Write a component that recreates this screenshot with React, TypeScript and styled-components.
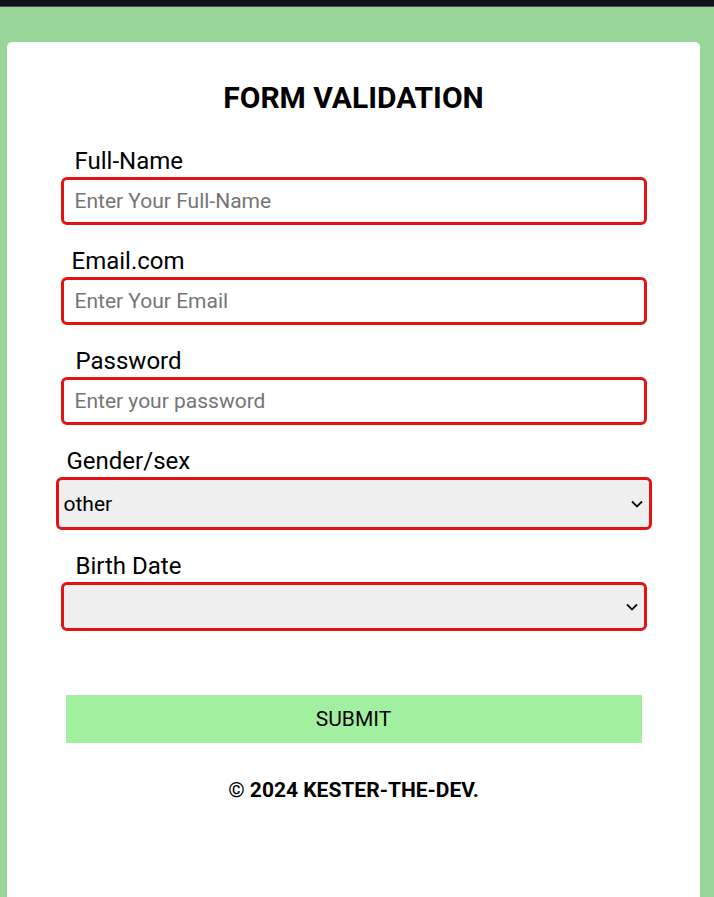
import React from "react";
import styled, { createGlobalStyle } from "styled-components";

const Global = createGlobalStyle`
  html, body { margin: 0; padding: 0; }
  body { font-family: Roboto, "Liberation Sans", Arial, sans-serif; background: #98d598; }
  * { box-sizing: border-box; }
`;

const TopBar = styled.div`
  height: 7px;
  background: #111119;
  border-bottom: 1px solid #4a4a4f;
`;

const Page = styled.div`
  background: #98d598;
  padding: 35px 14px 0 7px;
  height: 890px;
  overflow: hidden;
`;

const Card = styled.div`
  background: #ffffff;
  border-radius: 5px 5px 0 0;
  padding: 39px 0 0;
  height: 100%;
  display: flex;
  flex-direction: column;
  align-items: center;
`;

const Title = styled.h1`
  margin: 0 0 32px;
  font-size: 30px;
  line-height: 34px;
  font-weight: 700;
  color: #000;
`;

const Form = styled.form`
  width: 596px;
  display: flex;
  flex-direction: column;
  align-items: center;
`;

const Group = styled.div<{ $wide?: boolean }>`
  width: ${(p) => (p.$wide ? "596px" : "586px")};
  display: flex;
  flex-direction: column;
  gap: 2px;
  margin-top: 22px;
  &:first-child { margin-top: 0; }
`;

const Label = styled.label<{ $indent: number }>`
  font-size: 24px;
  line-height: 28px;
  color: #000;
  padding-left: ${(p) => p.$indent}px;
`;

const TextInput = styled.input`
  height: 48px;
  width: 100%;
  border: 3px solid #e01414;
  border-radius: 6px;
  padding: 0 11px;
  font-family: inherit;
  font-size: 21px;
  color: #000;
  background: #fff;
  outline: none;
  &::placeholder { color: #757575; }
`;

const SelectWrap = styled.div`
  position: relative;
  width: 100%;
`;

const Select = styled.select<{ $h: number }>`
  display: block;
  appearance: none;
  -webkit-appearance: none;
  height: ${(p) => p.$h}px;
  width: 100%;
  border: 3px solid #e01414;
  border-radius: 6px;
  padding: 0 30px 0 5px;
  font-family: inherit;
  font-size: 21px;
  color: #000;
  background: #efefef;
  outline: none;
`;

const Chevron = styled.svg`
  position: absolute;
  right: 9px;
  top: 50%;
  width: 12px;
  height: 8px;
  margin-top: -4px;
  pointer-events: none;
`;

const Submit = styled.button`
  margin-top: 64px;
  width: 576px;
  height: 48px;
  border: none;
  background: #a0f0a0;
  font-family: inherit;
  font-size: 21px;
  color: #000;
`;

const Footer = styled.p`
  margin: 35px 0 0;
  font-size: 21px;
  line-height: 25px;
  font-weight: 700;
  color: #000;
`;

const Arrow = () => (
  <Chevron viewBox="0 0 12 8" fill="none">
    <path d="M1 1.5 L6 6.5 L11 1.5" stroke="#111" strokeWidth="1.8" />
  </Chevron>
);

export default function App() {
  return (
    <>
      <Global />
      <TopBar />
      <Page>
        <Card>
          <Title>FORM VALIDATION</Title>
          <Form onSubmit={(e) => e.preventDefault()}>
            <Group>
              <Label $indent={14}>Full-Name</Label>
              <TextInput type="text" placeholder="Enter Your Full-Name" />
            </Group>
            <Group>
              <Label $indent={11}>Email.com</Label>
              <TextInput type="email" placeholder="Enter Your Email" />
            </Group>
            <Group>
              <Label $indent={15}>Password</Label>
              <TextInput type="password" placeholder="Enter your password" />
            </Group>
            <Group $wide>
              <Label $indent={11}>Gender/sex</Label>
              <SelectWrap>
                <Select $h={53} defaultValue="other">
                  <option value="male">male</option>
                  <option value="female">female</option>
                  <option value="other">other</option>
                </Select>
                <Arrow />
              </SelectWrap>
            </Group>
            <Group>
              <Label $indent={15}>Birth Date</Label>
              <SelectWrap>
                <Select $h={49} defaultValue="">
                  <option value=""></option>
                </Select>
                <Arrow />
              </SelectWrap>
            </Group>
            <Submit type="submit">SUBMIT</Submit>
          </Form>
          <Footer>© 2024 KESTER-THE-DEV.</Footer>
        </Card>
      </Page>
    </>
  );
}
